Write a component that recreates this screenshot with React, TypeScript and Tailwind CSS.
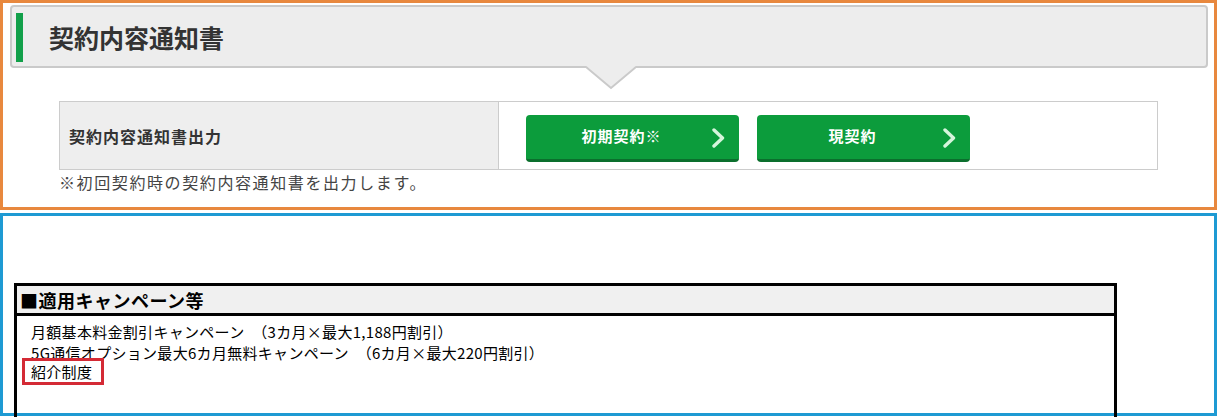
function GreenButton({ label }: { label: string }) {
    return (
        <button className="relative flex h-[47px] w-[213px] items-center justify-center rounded-[4px] border-b-[3px] border-[#0b6f2d] bg-[#0c9c3c] pr-[22px] text-[15px] font-bold tracking-[1px] text-white">
            {label}
            <svg className="absolute right-[13px] top-[13px]" width="15" height="20" viewBox="0 0 15 20">
                <polyline points="3,2 11.5,10 3,18" fill="none" stroke="#d6f5dc" strokeWidth="3.4" strokeLinecap="round" strokeLinejoin="round" />
            </svg>
        </button>
    );
}

export default function App() {
    return (
        <div className="w-[1220px] h-[417px] overflow-hidden bg-white text-[#333] font-['Noto_Sans_CJK_JP','Noto_Sans',sans-serif]">
            {/* 契約内容通知書 */}
            <section className="h-[210px] w-[1217px] border-[3px] border-[#e8883e]">
                <div className="relative mt-[2px] ml-[7px] mr-[6px] h-[63px] rounded-[4px] border-2 border-[#cacaca] bg-[#ededed] pl-[4px] pt-[6px]">
                    <div className="flex items-start">
                        <div className="h-[49px] w-[7px] bg-[#12a04a]" />
                        <h2 className="ml-[26px] mt-[8px] text-[25px] font-bold leading-[32px] text-[#333]">契約内容通知書</h2>
                    </div>
                    <svg className="absolute left-[574px] top-[59px]" width="50" height="24" viewBox="0 0 50 24">
                        <polygon points="0,0 25,22 50,0" fill="#ededed" />
                        <polyline points="0,1 25,22 50,1" fill="none" stroke="#cacaca" strokeWidth="2" />
                    </svg>
                </div>

                <div className="mt-[33px] ml-[56px] flex h-[69px] w-[1099px] border border-[#cccccc]">
                    <div className="flex w-[439px] items-center border-r border-[#cccccc] bg-[#eeeeee] pl-[9px] text-[16px] font-bold tracking-[1px] text-[#333]">
                        契約内容通知書出力
                    </div>
                    <div className="flex items-center gap-[18px] pl-[27px] pt-[5px]">
                        <GreenButton label="初期契約※" />
                        <GreenButton label="現契約" />
                    </div>
                </div>
                <p className="ml-[56px] mt-[2px] text-[16px] leading-[20px] tracking-[1.6px] text-[#444]">※初回契約時の契約内容通知書を出力します。</p>
            </section>

            {/* 適用キャンペーン等 */}
            <section className="mt-[3px] h-[203px] w-[1217px] border-[3px] border-[#1e9ad3]">
                <div className="ml-[11px] mt-[67px] w-[1103px] border-[3px] border-black">
                    <div className="flex h-[30px] items-center border-b-[3px] border-black bg-[#f0f0f0] pl-[3px] text-[18px] font-bold leading-[22px] tracking-[0.5px] text-black">
                        ■適用キャンペーン等
                    </div>
                    <div className="flex h-[120px] flex-col items-start pl-[14px] pt-[5px] text-[15px] leading-[21px] tracking-[0.3px] text-black">
                        <p>月額基本料金割引キャンペーン　（3カ月×最大1,188円割引）</p>
                        <p>5G通信オプション最大6カ月無料キャンペーン　（6カ月×最大220円割引）</p>
                        <p className="ml-[-9px] mt-[-5px] flex h-[27px] w-[82px] items-center border-[3px] border-[#d42a35] pl-[6px]">紹介制度</p>
                    </div>
                </div>
            </section>
        </div>
    );
}
